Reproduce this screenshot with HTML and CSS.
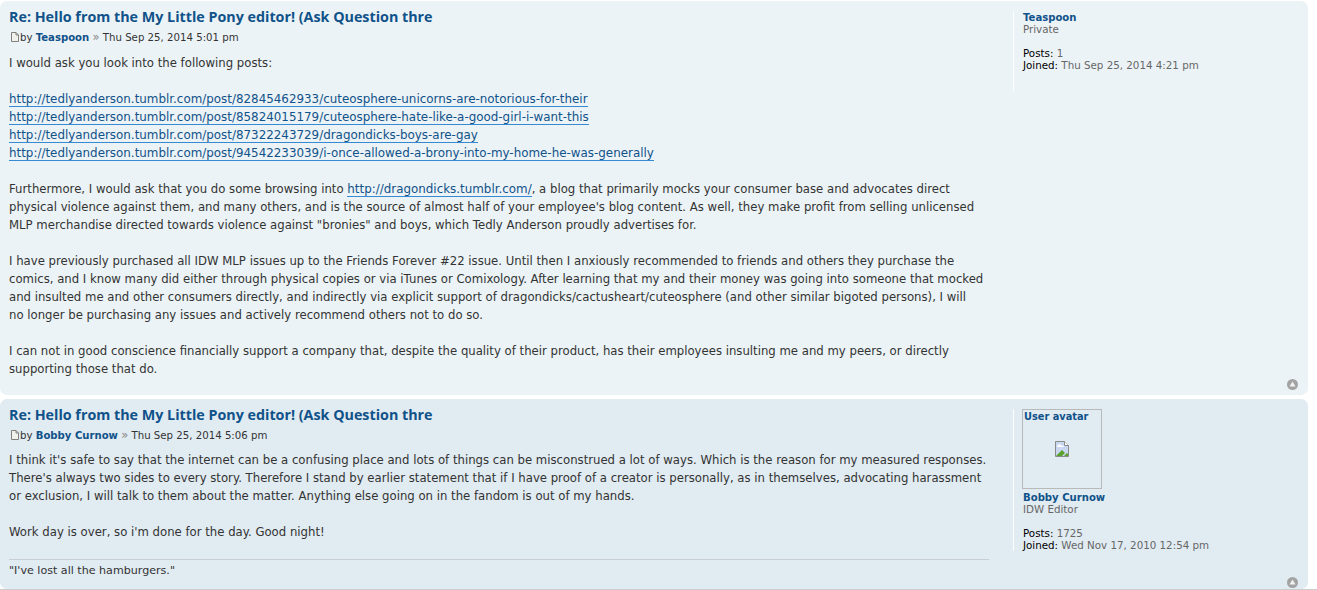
FILE: index.html
```html
<!DOCTYPE html>
<html lang="en">
<head>
<meta charset="utf-8">
<title>Hello from the My Little Pony editor!</title>
<link rel="stylesheet" href="styles.css">
</head>
<body>
<div class="post post-a">
  <div class="postbody">
    <h3 class="title">Re: Hello from the My Little Pony editor! (Ask Question thre</h3>
    <p class="author"><svg class="mini" viewBox="0 0 8 10" width="8" height="10"><path d="M.5.5h4.500l2.500 2.500v6.500h-7z" fill="#f1f1ec" stroke="#808080"/><path d="M5 .5v2.500h2.500" fill="none" stroke="#808080"/></svg>by <a class="user" href="#">Teaspoon</a> <span class="raquo">»</span> Thu Sep 25, 2014 5:01 pm</p>
    <div class="content">I would ask you look into the following posts:<br><br><a href="#">http://tedlyanderson.tumblr.com/post/82845462933/cuteosphere-unicorns-are-notorious-for-their</a><br><a href="#">http://tedlyanderson.tumblr.com/post/85824015179/cuteosphere-hate-like-a-good-girl-i-want-this</a><br><a href="#">http://tedlyanderson.tumblr.com/post/87322243729/dragondicks-boys-are-gay</a><br><a href="#">http://tedlyanderson.tumblr.com/post/94542233039/i-once-allowed-a-brony-into-my-home-he-was-generally</a><br><br>Furthermore, I would ask that you do some browsing into <a href="#">http://dragondicks.tumblr.com/</a>, a blog that primarily mocks your consumer base and advocates direct<br>physical violence against them, and many others, and is the source of almost half of your employee's blog content. As well, they make profit from selling unlicensed<br>MLP merchandise directed towards violence against "bronies" and boys, which Tedly Anderson proudly advertises for.<br><br>I have previously purchased all IDW MLP issues up to the Friends Forever #22 issue. Until then I anxiously recommended to friends and others they purchase the<br>comics, and I know many did either through physical copies or via iTunes or Comixology. After learning that my and their money was going into someone that mocked<br>and insulted me and other consumers directly, and indirectly via explicit support of dragondicks/cactusheart/cuteosphere (and other similar bigoted persons), I will<br>no longer be purchasing any issues and actively recommend others not to do so.<br><br>I can not in good conscience financially support a company that, despite the quality of their product, has their employees insulting me and my peers, or directly<br>supporting those that do.</div>
  </div>
  <div class="profile">
    <a class="user" href="#">Teaspoon</a><br><span class="rank">Private</span><br><br><b>Posts:</b> 1<br><b>Joined:</b> Thu Sep 25, 2014 4:21 pm
  </div>
  <svg class="top" viewBox="0 0 11 11" width="11" height="11"><circle cx="5.500" cy="5.500" r="5.500" fill="#a3a3a3"/><path d="M5.500 2.500 8.500 7.500h-6z" fill="#f2f2f2"/></svg>
</div>
<div class="post post-b">
  <div class="postbody">
    <h3 class="title">Re: Hello from the My Little Pony editor! (Ask Question thre</h3>
    <p class="author"><svg class="mini" viewBox="0 0 8 10" width="8" height="10"><path d="M.5.5h4.500l2.500 2.500v6.500h-7z" fill="#f1f1ec" stroke="#808080"/><path d="M5 .5v2.500h2.500" fill="none" stroke="#808080"/></svg>by <a class="user" href="#">Bobby Curnow</a> <span class="raquo">»</span> Thu Sep 25, 2014 5:06 pm</p>
    <div class="content">I think it's safe to say that the internet can be a confusing place and lots of things can be misconstrued a lot of ways. Which is the reason for my measured responses.<br>There's always two sides to every story. Therefore I stand by earlier statement that if I have proof of a creator is personally, as in themselves, advocating harassment<br>or exclusion, I will talk to them about the matter. Anything else going on in the fandom is out of my hands.<br><br>Work day is over, so i'm done for the day. Good night!</div>
    <div class="signature">"I've lost all the hamburgers."</div>
  </div>
  <div class="profile">
    <div class="avatar"><span class="alt">User avatar</span><svg class="broken" viewBox="0 0 14 16" width="14" height="16"><path d="M.5.5h9l4 4v11H.500z" fill="#c9d7f1" stroke="#8a8a8a"/><path d="M1 15 7 9l3 3-3 3z" fill="#5aa02c"/><path d="M9 15l3-3 1 1v2z" fill="#5aa02c"/><path d="M2 5q2-3 4-1t2 0l1 2H2z" fill="#fff"/><path d="M9.500.5v4h4" fill="#fff" stroke="#8a8a8a"/></svg></div>
    <a class="user" href="#">Bobby Curnow</a><br><span class="rank">IDW Editor</span><br><br><b>Posts:</b> 1725<br><b>Joined:</b> Wed Nov 17, 2010 12:54 pm
  </div>
  <svg class="top" viewBox="0 0 11 11" width="11" height="11"><circle cx="5.500" cy="5.500" r="5.500" fill="#a3a3a3"/><path d="M5.500 2.500 8.500 7.500h-6z" fill="#f2f2f2"/></svg>
</div>
</body>
</html>
```
FILE: styles.css
```css
html, body { margin: 0; padding: 0; background: #fff; }
body {
  width: 1317px;
  height: 590px;
  overflow: hidden;
  font-family: "DejaVu Sans", Verdana, sans-serif;
  color: #333;
  border-bottom: 1px solid #ccc;
  box-sizing: border-box;
  padding-top: 1px;
}
a { color: #105289; text-decoration: none; }
.post {
  position: relative;
  display: flex;
  width: 1308px;
  box-sizing: border-box;
  border-radius: 7px;
  padding: 0 9px;
}
.post-a { background: #ecf3f7; height: 394px; margin-bottom: 4px; }
.post-b { background: #e1ebf2; height: 190px; }
.postbody { width: 980px; flex: none; }
.title {
  margin: 0;
  padding-top: 7px;
  font-family: "Open Sans", "DejaVu Sans", sans-serif;
  font-size: 14.3px;
  line-height: 17px;
  font-weight: bold;
  color: #105289;
}
.author {
  margin: 0;
  padding-top: 6px;
  font-size: 10.2px;
  line-height: 14px;
  color: #333;
}
.mini { vertical-align: -1px; margin: 0 1px 0 2px; }
.author .user, .profile .user { font-weight: bold; font-size: 10.1px; line-height: 1; }
.raquo { color: #888; font-size: 11.5px; line-height: 1; }
.content {
  padding-top: 9px;
  font-size: 11.7px;
  line-height: 18px;
  white-space: nowrap;
  color: #333;
}
.post-b .content { padding-top: 8px; }
.content a {
  font-size: 11.9px;
  line-height: 1;
  color: #105289;
  border-bottom: 1px solid #368ad2;
}
.signature {
  margin-top: 18px;
  border-top: 1px solid #c9ced3;
  padding-top: 4px;
  font-size: 11.1px;
  line-height: 14px;
  color: #333;
}
.profile {
  margin: 10px 0 0 24px;
  padding: 0 0 0 9px;
  border-left: 1px solid #fff;
  box-sizing: border-box;
  height: 80px;
  font-size: 10.3px;
  line-height: 12px;
  color: #666;
  flex: none;
}
.post-b .profile { height: 142px; }
.profile b { font-weight: normal; color: #000; }
.rank { color: #666; }
.avatar {
  box-sizing: border-box;
  position: relative;
  width: 80px;
  height: 80px;
  border: 1px solid #b9b9b9;
  margin: 0 0 2px -1px;
  padding: 1px 0 0 1px;
  font-size: 9.8px;
  font-weight: bold;
  color: #105289;
}
.broken { position: absolute; left: 32px; top: 31px; }
.top { position: absolute; right: 10px; bottom: 5px; }
.post-b .top { bottom: 1px; }
```
